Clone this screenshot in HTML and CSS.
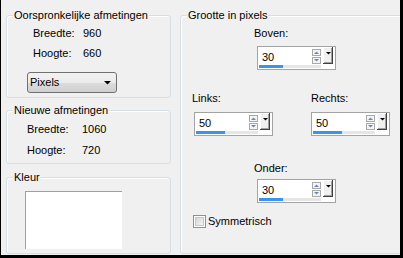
FILE: index.html
```html
<!DOCTYPE html>
<html>
<head>
<meta charset="utf-8">
<link rel="stylesheet" href="styles.css">
</head>
<body>
<div class="window">
  <div class="left-col">
    <div class="group g-orig">
      <span class="legend">Oorspronkelijke afmetingen</span>
      <div class="dims dims-orig">
        <span>Breedte:</span><span>960</span>
        <span>Hoogte:</span><span>660</span>
      </div>
      <div class="combo">
        <span class="combo-text">Pixels</span>
        <svg class="combo-arrow" width="7" height="4" viewBox="0 0 7 4"><polygon points="0,0 7,0 3.5,3.5" fill="#000"/></svg>
      </div>
    </div>
    <div class="group g-new">
      <span class="legend">Nieuwe afmetingen</span>
      <div class="dims dims-new">
        <span>Breedte:</span><span>1060</span>
        <span>Hoogte:</span><span>720</span>
      </div>
    </div>
    <div class="group g-color">
      <span class="legend">Kleur</span>
      <div class="swatch"></div>
    </div>
  </div>
  <div class="group g-size">
    <span class="legend">Grootte in pixels</span>
    <div class="lbl lbl-boven">Boven:</div>
    <div class="spin spin-boven">
      <div class="spin-top">
        <span class="spin-val">30</span>
        <svg class="spin-btns" width="22" height="17" viewBox="0 0 22 17">
          <rect x="0.5" y="2.5" width="8" height="6" fill="#f4f4f4" stroke="#a9a9a9"/>
          <polygon points="2,7 7,7 4.5,4.5" fill="#6f86b6"/>
          <rect x="0.5" y="10.5" width="8" height="6" fill="#f4f4f4" stroke="#a9a9a9"/>
          <polygon points="2,12 7,12 4.5,14.5" fill="#6f86b6"/>
          <rect x="11" y="0" width="10" height="17" fill="#f0f0f0"/>
          <rect x="11" y="0" width="10" height="1" fill="#ffffff"/>
          <rect x="11" y="0" width="1" height="17" fill="#ffffff"/>
          <rect x="20" y="0" width="1" height="17" fill="#404040"/>
          <rect x="11" y="16" width="10" height="1" fill="#404040"/>
          <rect x="19" y="1" width="1" height="15" fill="#a0a0a0"/>
          <rect x="12" y="15" width="8" height="1" fill="#a0a0a0"/>
          <polygon points="14,5 19,5 16.5,7.5" fill="#000"/>
        </svg>
      </div>
      <div class="bar"><div class="bar-fill" style="width:24px"></div></div>
    </div>
    <div class="lr-row">
      <div class="lr-item lr-links">
        <div class="lbl lbl-links">Links:</div>
        <div class="spin">
          <div class="spin-top">
            <span class="spin-val">50</span>
            <svg class="spin-btns" width="22" height="17" viewBox="0 0 22 17">
              <rect x="0.5" y="2.5" width="8" height="6" fill="#f4f4f4" stroke="#a9a9a9"/>
              <polygon points="2,7 7,7 4.5,4.5" fill="#6f86b6"/>
              <rect x="0.5" y="10.5" width="8" height="6" fill="#f4f4f4" stroke="#a9a9a9"/>
              <polygon points="2,12 7,12 4.5,14.5" fill="#6f86b6"/>
              <rect x="11" y="0" width="10" height="17" fill="#f0f0f0"/>
              <rect x="11" y="0" width="10" height="1" fill="#ffffff"/>
              <rect x="11" y="0" width="1" height="17" fill="#ffffff"/>
              <rect x="20" y="0" width="1" height="17" fill="#404040"/>
              <rect x="11" y="16" width="10" height="1" fill="#404040"/>
              <rect x="19" y="1" width="1" height="15" fill="#a0a0a0"/>
              <rect x="12" y="15" width="8" height="1" fill="#a0a0a0"/>
              <polygon points="14,5 19,5 16.5,7.5" fill="#000"/>
            </svg>
          </div>
          <div class="bar"><div class="bar-fill" style="width:29px"></div></div>
        </div>
      </div>
      <div class="lr-item lr-rechts">
        <div class="lbl">Rechts:</div>
        <div class="spin">
          <div class="spin-top">
            <span class="spin-val">50</span>
            <svg class="spin-btns" width="22" height="17" viewBox="0 0 22 17">
              <rect x="0.5" y="2.5" width="8" height="6" fill="#f4f4f4" stroke="#a9a9a9"/>
              <polygon points="2,7 7,7 4.5,4.5" fill="#6f86b6"/>
              <rect x="0.5" y="10.5" width="8" height="6" fill="#f4f4f4" stroke="#a9a9a9"/>
              <polygon points="2,12 7,12 4.5,14.5" fill="#6f86b6"/>
              <rect x="11" y="0" width="10" height="17" fill="#f0f0f0"/>
              <rect x="11" y="0" width="10" height="1" fill="#ffffff"/>
              <rect x="11" y="0" width="1" height="17" fill="#ffffff"/>
              <rect x="20" y="0" width="1" height="17" fill="#404040"/>
              <rect x="11" y="16" width="10" height="1" fill="#404040"/>
              <rect x="19" y="1" width="1" height="15" fill="#a0a0a0"/>
              <rect x="12" y="15" width="8" height="1" fill="#a0a0a0"/>
              <polygon points="14,5 19,5 16.5,7.5" fill="#000"/>
            </svg>
          </div>
          <div class="bar"><div class="bar-fill" style="width:29px"></div></div>
        </div>
      </div>
    </div>
    <div class="lbl lbl-onder">Onder:</div>
    <div class="spin spin-onder">
      <div class="spin-top">
        <span class="spin-val">30</span>
        <svg class="spin-btns" width="22" height="17" viewBox="0 0 22 17">
          <rect x="0.5" y="2.5" width="8" height="6" fill="#f4f4f4" stroke="#a9a9a9"/>
          <polygon points="2,7 7,7 4.5,4.5" fill="#6f86b6"/>
          <rect x="0.5" y="10.5" width="8" height="6" fill="#f4f4f4" stroke="#a9a9a9"/>
          <polygon points="2,12 7,12 4.5,14.5" fill="#6f86b6"/>
          <rect x="11" y="0" width="10" height="17" fill="#f0f0f0"/>
          <rect x="11" y="0" width="10" height="1" fill="#ffffff"/>
          <rect x="11" y="0" width="1" height="17" fill="#ffffff"/>
          <rect x="20" y="0" width="1" height="17" fill="#404040"/>
          <rect x="11" y="16" width="10" height="1" fill="#404040"/>
          <rect x="19" y="1" width="1" height="15" fill="#a0a0a0"/>
          <rect x="12" y="15" width="8" height="1" fill="#a0a0a0"/>
          <polygon points="14,5 19,5 16.5,7.5" fill="#000"/>
        </svg>
      </div>
      <div class="bar"><div class="bar-fill" style="width:24px"></div></div>
    </div>
    <label class="check">
      <span class="check-box"><span class="check-inner"></span></span>
      <span class="check-text">Symmetrisch</span>
    </label>
  </div>
</div>
</body>
</html>
```
FILE: styles.css
```css
* { box-sizing: border-box; }
html, body { margin: 0; padding: 0; background: #f0f0f0; }
body {
  font-family: "Liberation Sans", Arial, sans-serif;
  font-size: 11px;
  line-height: 13px;
  color: #000;
}
.window {
  width: 403px;
  height: 258px;
  display: flex;
  align-items: flex-start;
  padding: 15px 0 0 5px;
  border-left: 1px solid #000;
  border-right: 3px solid #000;
  border-bottom: 3px solid #000;
  overflow: hidden;
  background: #f0f0f0;
}
.left-col {
  width: 165px;
  flex-shrink: 0;
  display: flex;
  flex-direction: column;
}
.group {
  position: relative;
  border: 1px solid #d5dfe5;
  border-radius: 3px;
  box-shadow: inset 1px 1px 0 #fff;
}
.legend {
  position: absolute;
  top: -7px;
  left: 6px;
  padding: 0 1px;
  background: #f0f0f0;
  white-space: nowrap;
}
.g-orig { height: 83px; padding: 11px 0 0 0; }
.g-new { height: 54px; margin-top: 12px; padding: 12px 0 0 0; }
.g-color { height: 77px; margin-top: 13px; padding: 13px 0 0 18px; }
.dims {
  display: grid;
  grid-template-columns: 50px auto;
}
.dims-orig { padding-left: 26px; row-gap: 7px; }
.dims-new { padding-left: 20px; grid-template-columns: 55px auto; row-gap: 8px; }
.combo {
  margin: 12px 0 0 20px;
  width: 90px;
  height: 21px;
  border: 1px solid #707070;
  border-radius: 3px;
  background: linear-gradient(#f2f2f2 0%, #ebebeb 50%, #dddddd 50%, #cfcfcf 100%);
  display: flex;
  align-items: flex-start;
  padding: 3px 0 0 2px;
}
.combo-text { flex: 1; }
.combo-arrow { margin: 5px 5px 0 0; }
.swatch {
  width: 97px;
  height: 58px;
  background: #fff;
  border-top: 1px solid #a0a0a0;
  border-left: 1px solid #a0a0a0;
}
.g-size {
  width: 240px;
  height: 239px;
  flex-shrink: 0;
  margin-left: 9px;
  padding-top: 11px;
}
.lbl { white-space: nowrap; }
.lbl-boven { margin-left: 73px; }
.spin {
  width: 79px;
  height: 24px;
  border: 1px solid #a3a3a3;
  background: #fff;
}
.spin-boven { margin: 6px 0 0 76px; }
.spin-top {
  height: 17px;
  display: flex;
  align-items: flex-start;
}
.spin-val { width: 54px; padding: 4px 0 0 4px; }
.spin-btns { display: block; }
.bar {
  margin: 1px 0 0 1px;
  width: 62px;
  height: 3px;
  background: #e6e6e6;
}
.bar-fill { height: 3px; background: #3a93ec; }
.lr-row {
  display: flex;
  margin-top: 22px;
}
.lr-item .spin { margin-top: 7px; }
.lr-links { margin-left: 11px; width: 118px; }
.lr-links .spin { margin-left: 2px; }
.lr-rechts { margin-left: 1px; }
.lbl-onder { margin: 26px 0 0 73px; }
.spin-onder { margin: 4px 0 0 76px; }
.check {
  display: flex;
  align-items: center;
  margin: 12px 0 0 12px;
}
.check-box {
  width: 13px;
  height: 13px;
  border: 1px solid #8e8f8f;
  background: #fff;
  padding: 1px;
  display: block;
}
.check-inner {
  display: block;
  width: 9px;
  height: 9px;
  border: 1px solid #c4c6c8;
  background: linear-gradient(135deg, #d2d4d6, #f6f6f6);
}
.check-text { margin-left: 2px; }
```
